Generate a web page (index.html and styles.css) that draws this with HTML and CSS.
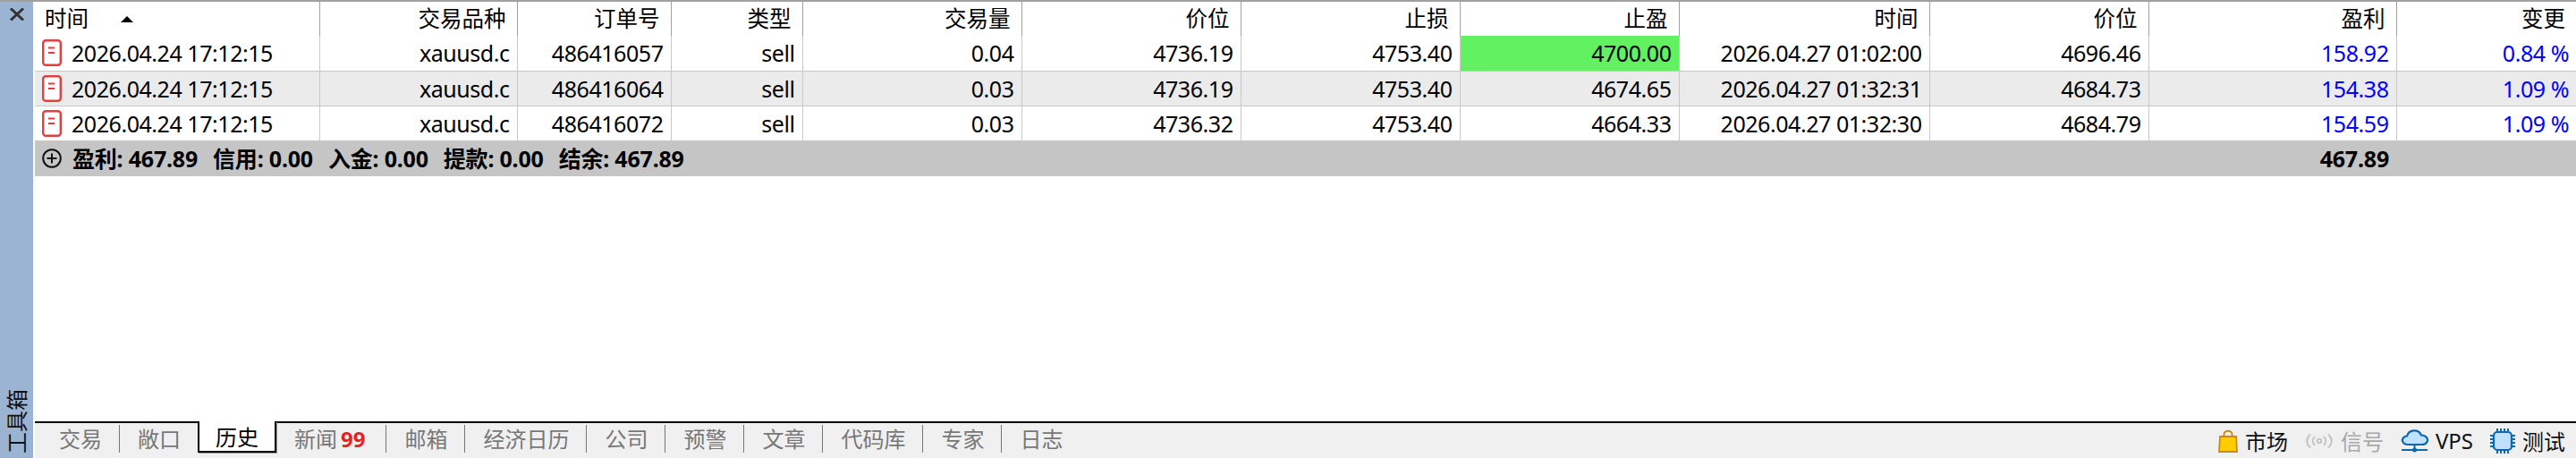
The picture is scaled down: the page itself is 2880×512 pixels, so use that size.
FILE: index.html
```html
<!DOCTYPE html>
<html lang="zh-CN">
<head>
    <meta charset="UTF-8">
    <title>工具箱 - 历史</title>
    <link rel="stylesheet" href="styles.css">
</head>
<body>
    <!-- Toolbox side strip -->
    <div class="side-strip">
        <svg class="close-icon" width="16" height="14" viewBox="0 0 16 14"><path d="M1 0.5 L15 13.5 M15 0.5 L1 13.5" stroke="#333" stroke-width="3" fill="none"/></svg>
        <span class="side-label">工具箱</span>
    </div>

    <div class="main">
        <!-- History table -->
        <table class="history">
            <colgroup>
                <col class="c-open"><col class="c-symbol"><col class="c-order"><col class="c-type"><col class="c-std"><col class="c-std"><col class="c-std"><col class="c-std"><col class="c-close"><col class="c-std"><col class="c-profit"><col class="c-change">
            </colgroup>
            <thead>
                <tr>
                    <th class="left">时间<svg class="sort-arrow" width="14" height="7" viewBox="0 0 14 7"><path d="M7 0 L14 7 L0 7 Z" fill="#000"/></svg></th>
                    <th>交易品种</th><th>订单号</th><th>类型</th><th>交易量</th><th>价位</th><th>止损</th><th>止盈</th><th>时间</th><th>价位</th><th>盈利</th><th>变更</th>
                </tr>
            </thead>
            <tbody>
                <tr>
                    <td class="left"><span class="time-cell"><svg class="doc-icon" width="22" height="30" viewBox="0 0 22 30"><rect x="1.2" y="1.2" width="19.6" height="27.6" rx="3" fill="#fff" stroke="#e04040" stroke-width="2.4"/><path d="M7 9.5 H14 M7 15 H14" stroke="#e04040" stroke-width="2.2"/></svg>2026.04.24 17:12:15</span></td>
                    <td>xauusd.c</td><td>486416057</td><td>sell</td><td>0.04</td><td>4736.19</td><td>4753.40</td><td class="hit">4700.00</td><td>2026.04.27 01:02:00</td><td>4696.46</td><td class="blue">158.92</td><td class="blue">0.84 %</td>
                </tr>
                <tr class="alt">
                    <td class="left"><span class="time-cell"><svg class="doc-icon" width="22" height="30" viewBox="0 0 22 30"><rect x="1.2" y="1.2" width="19.6" height="27.6" rx="3" fill="#fff" stroke="#e04040" stroke-width="2.4"/><path d="M7 9.5 H14 M7 15 H14" stroke="#e04040" stroke-width="2.2"/></svg>2026.04.24 17:12:15</span></td>
                    <td>xauusd.c</td><td>486416064</td><td>sell</td><td>0.03</td><td>4736.19</td><td>4753.40</td><td>4674.65</td><td>2026.04.27 01:32:31</td><td>4684.73</td><td class="blue">154.38</td><td class="blue">1.09 %</td>
                </tr>
                <tr>
                    <td class="left"><span class="time-cell"><svg class="doc-icon" width="22" height="30" viewBox="0 0 22 30"><rect x="1.2" y="1.2" width="19.6" height="27.6" rx="3" fill="#fff" stroke="#e04040" stroke-width="2.4"/><path d="M7 9.5 H14 M7 15 H14" stroke="#e04040" stroke-width="2.2"/></svg>2026.04.24 17:12:15</span></td>
                    <td>xauusd.c</td><td>486416072</td><td>sell</td><td>0.03</td><td>4736.32</td><td>4753.40</td><td>4664.33</td><td>2026.04.27 01:32:30</td><td>4684.79</td><td class="blue">154.59</td><td class="blue">1.09 %</td>
                </tr>
                <tr class="summary">
                    <td class="left" colspan="10">
                        <span class="summary-line">
                            <svg class="plus-icon" width="22" height="22" viewBox="0 0 22 22"><circle cx="11" cy="11" r="9.8" fill="none" stroke="#111" stroke-width="2"/><path d="M11 5.5 V16.5 M5.5 11 H16.5" stroke="#111" stroke-width="2"/></svg>
                            <span>盈利: 467.89</span><span>信用: 0.00</span><span>入金: 0.00</span><span>提款: 0.00</span><span>结余: 467.89</span>
                        </span>
                    </td>
                    <td>467.89</td><td></td>
                </tr>
            </tbody>
        </table>

        <!-- Bottom tabs and status items -->
        <div class="tab-bar">
            <div class="tabs">
                <span class="tab">交易</span>
                <span class="tab pre-active">敞口</span>
                <span class="tab active">历史</span>
                <span class="tab">新闻<b class="badge">99</b></span>
                <span class="tab">邮箱</span>
                <span class="tab">经济日历</span>
                <span class="tab">公司</span>
                <span class="tab">预警</span>
                <span class="tab">文章</span>
                <span class="tab">代码库</span>
                <span class="tab">专家</span>
                <span class="tab last">日志</span>
            </div>
            <div class="status">
                <span class="status-item">
                    <svg width="22" height="26" viewBox="0 0 22 26"><path d="M6.5 9 V5.5 C6.5 0.5 15.5 0.5 15.5 5.5 V9" fill="none" stroke="#c98a10" stroke-width="2"/><path d="M2 8 H20 L21 25 H1 Z" fill="#ffcc00" stroke="#c98a10" stroke-width="1.8"/></svg>
                    市场
                </span>
                <span class="status-item muted">
                    <svg width="32" height="18" viewBox="0 0 32 18" fill="none" stroke="#c4c4c4" stroke-width="2"><path d="M6 1.5 C1 6 1 12 6 16.5 M11 4 C8 7 8 11 11 14 M21 4 C24 7 24 11 21 14 M26 1.5 C31 6 31 12 26 16.5"/><circle cx="16" cy="9" r="2.2"/></svg>
                    信号
                </span>
                <span class="status-item">
                    <svg width="31" height="27" viewBox="0 0 31 27"><path d="M8 18 C2 18 0 12 4 9.5 C5 8.5 6 8.5 7 8.5 C9 1 20 0 23 7.5 C29 7.5 31 12 29.5 15 C28.5 17 26.5 18 24 18 Z" fill="#bfe0ff" stroke="#0b68ad" stroke-width="2.2"/><path d="M15.500 18 V23 M1 24 H30" stroke="#0b68ad" stroke-width="2"/><circle cx="15.500" cy="24" r="2.500" fill="#0b68ad"/></svg>
                    VPS
                </span>
                <span class="status-item">
                    <svg width="28" height="28" viewBox="0 0 28 28"><rect x="4" y="4" width="20" height="20" rx="4" fill="#bfe0ff" stroke="#0b68ad" stroke-width="2.2"/><path d="M8 0 V3 M12 0 V3 M16 0 V3 M20 0 V3 M8 25 V28 M12 25 V28 M16 25 V28 M20 25 V28 M0 8 H3 M0 12 H3 M0 16 H3 M0 20 H3 M25 8 H28 M25 12 H28 M25 16 H28 M25 20 H28" stroke="#0b68ad" stroke-width="2"/></svg>
                    测试
                </span>
            </div>
        </div>
    </div>
</body>
</html>
```

FILE: styles.css
```css
/* Basic reset */
* {
    margin: 0;
    padding: 0;
    box-sizing: border-box;
}

html, body {
    height: 100%;
    overflow: hidden;
}

body {
    display: flex;
    background-color: #fff;
    color: #000;
    border-top: 2px solid #a0a0a0;
    font-family: "Noto Sans", "Noto Sans CJK SC", sans-serif;
    font-size: 25px;
    letter-spacing: -0.45px;
}

/* Side strip */
.side-strip {
    width: 37px;
    margin-right: 2px;
    flex-shrink: 0;
    background-color: #9ab4d2;
    display: flex;
    flex-direction: column;
    align-items: center;
    justify-content: space-between;
    padding: 7px 0 5px;
}

.side-label {
    writing-mode: vertical-rl;
    text-orientation: sideways;
    transform: rotate(180deg);
    font-size: 24px;
    letter-spacing: 0;
    line-height: 26px;
    color: #111;
}

/* Main column */
.main {
    flex: 1;
    min-width: 0;
    display: flex;
    flex-direction: column;
    justify-content: space-between;
}

/* History table */
.history {
    width: 2841px;
    table-layout: fixed;
    border-collapse: collapse;
    line-height: 30px;
}

.c-open { width: 318px; }
.c-symbol { width: 221px; }
.c-order { width: 172px; }
.c-type { width: 147px; }
.c-std { width: 245px; }
.c-close { width: 280px; }
.c-profit { width: 277px; }
.c-change { width: 201px; }

.history th {
    height: 38px;
    padding: 0 12px 0 0;
    text-align: right;
    font-weight: 400;
    font-size: 24.5px;
    letter-spacing: 0;
    border-right: 1px solid #a0a0a0;
}

.history th:last-child, .history td:last-child {
    border-right: none;
}

.history td {
    height: 39px;
    padding: 0 8px 0 0;
    text-align: right;
    white-space: nowrap;
    border-right: 1px solid #c8c8c8;
    border-bottom: 1px solid #c8c8c8;
}

.history .left {
    text-align: left;
    padding-left: 11px;
}

.sort-arrow {
    margin-left: 36px;
    vertical-align: 5px;
}

.time-cell {
    display: flex;
    align-items: center;
    gap: 11px;
}

.doc-icon, .plus-icon {
    flex-shrink: 0;
    margin-left: -3px;
}

.alt td {
    background-color: #ebebeb;
}

.history td.hit {
    background-color: #61f161;
}

.blue {
    color: #0000ff;
}

/* Summary row */
.history .summary td {
    height: 40px;
    background-color: #c5c5c5;
    border: none;
    font-weight: 700;
    letter-spacing: -0.2px;
}

.summary-line {
    display: flex;
    align-items: center;
    gap: 17px;
}

.summary-line .plus-icon {
    margin-right: -5px;
}

/* Tab bar */
.tab-bar {
    height: 41px;
    background-color: #f0f0f0;
    border-top: 2px solid #000;
    display: flex;
    justify-content: space-between;
    font-size: 24px;
    letter-spacing: 0;
}

.tabs {
    display: flex;
    align-items: flex-start;
    padding: 2px 0 0 7px;
}

.tab {
    height: 31px;
    line-height: 31px;
    padding: 0 19px 0 20px;
    color: #777;
    border-right: 1px solid #777;
}

.tab.last, .tab.pre-active {
    border-right: none;
}

.tab.active {
    color: #000;
    background-color: #fff;
    margin-top: -4px;
    height: 35px;
    line-height: 35px;
    border-left: 2px solid #000;
    border-right: 2px solid #000;
    border-bottom: 2px solid #000;
    padding: 0 18px;
    box-shadow: 1px 1px 0 #999;
}

.badge {
    color: #ee1c25;
    margin: 0 4px;
}

/* Status items on the right */
.status {
    display: flex;
    align-items: center;
    gap: 19px;
    padding-right: 12px;
    color: #111;
}

.status-item {
    display: flex;
    align-items: center;
    gap: 8px;
}

.status-item.muted {
    color: #a8a8a8;
}
```
